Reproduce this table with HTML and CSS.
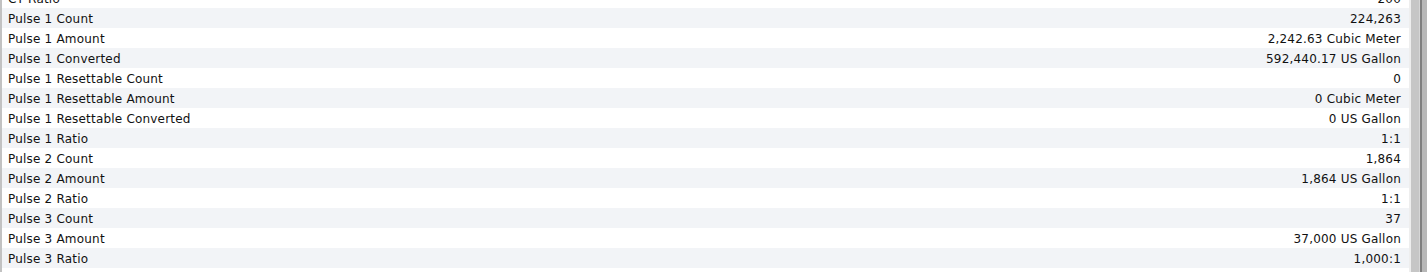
FILE: index.html
```html
<!DOCTYPE html>
<html>
<head>
<meta charset="utf-8">
<link rel="stylesheet" href="styles.css">
</head>
<body>
<div class="frame">
  <div class="table">
    <div class="rows">
      <div class="row"><span>CT Ratio</span><span>200</span></div>
      <div class="row"><span>Pulse 1 Count</span><span>224,263</span></div>
      <div class="row"><span>Pulse 1 Amount</span><span>2,242.63 Cubic Meter</span></div>
      <div class="row"><span>Pulse 1 Converted</span><span>592,440.17 US Gallon</span></div>
      <div class="row"><span>Pulse 1 Resettable Count</span><span>0</span></div>
      <div class="row"><span>Pulse 1 Resettable Amount</span><span>0 Cubic Meter</span></div>
      <div class="row"><span>Pulse 1 Resettable Converted</span><span>0 US Gallon</span></div>
      <div class="row"><span>Pulse 1 Ratio</span><span>1:1</span></div>
      <div class="row"><span>Pulse 2 Count</span><span>1,864</span></div>
      <div class="row"><span>Pulse 2 Amount</span><span>1,864 US Gallon</span></div>
      <div class="row"><span>Pulse 2 Ratio</span><span>1:1</span></div>
      <div class="row"><span>Pulse 3 Count</span><span>37</span></div>
      <div class="row"><span>Pulse 3 Amount</span><span>37,000 US Gallon</span></div>
      <div class="row"><span>Pulse 3 Ratio</span><span>1,000:1</span></div>
    </div>
  </div>
  <div class="scrollbar">
    <div class="sb-edge"></div>
    <div class="sb-track"></div>
    <div class="sb-hl"></div>
    <div class="sb-line"></div>
    <div class="sb-outer"></div>
  </div>
</div>
</body>
</html>
```
FILE: styles.css
```css
html, body {
  margin: 0;
  padding: 0;
  background: #ffffff;
}
.frame {
  display: flex;
  height: 272px;
  overflow: hidden;
}
.table {
  flex: 1;
  border-left: 2px solid #c2c2c2;
  overflow: hidden;
  background: #ffffff;
}
.rows {
  margin-top: -12px;
}
.row {
  display: flex;
  justify-content: space-between;
  align-items: center;
  box-sizing: border-box;
  height: 20px;
  padding: 2px 8px 0 6px;
  font-family: "DejaVu Sans", Verdana, sans-serif;
  font-size: 12px;
  letter-spacing: 0.2px;
  color: #111111;
  background: #ffffff;
}
.row:nth-child(even) {
  background: #f2f4f7;
}
.scrollbar {
  display: flex;
  width: 18px;
  height: 272px;
}
.sb-edge { width: 2px; background: #eeeeee; }
.sb-track { width: 8px; background: #c6c6c6; }
.sb-hl { width: 1px; background: #d6d6d6; }
.sb-line { width: 2px; background: #7f7f7f; }
.sb-outer { flex: 1; background: #b8b8b8; }
```
